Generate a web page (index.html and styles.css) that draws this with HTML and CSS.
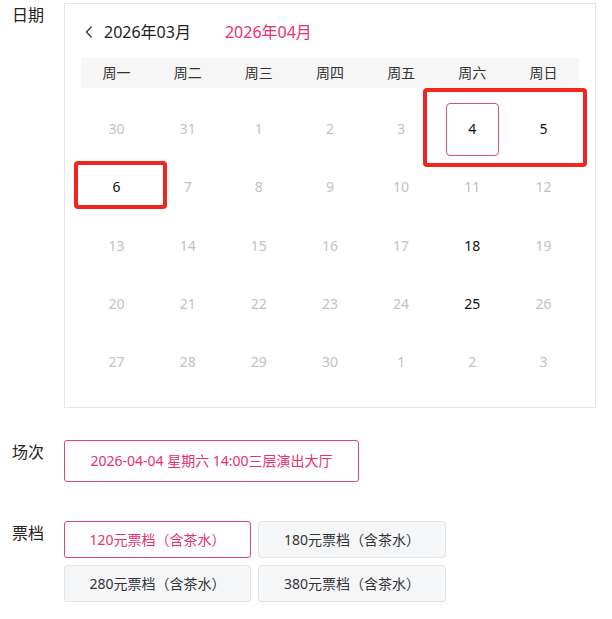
FILE: index.html
```html
<!DOCTYPE html>
<html lang="zh-CN">
<head>
<meta charset="utf-8">
<title>选择场次</title>
<link rel="stylesheet" href="styles.css">
</head>
<body>
<div class="page">
  <div class="row">
    <div class="label">日期</div>
    <div class="calendar">
      <div class="nav">
        <svg class="chev" width="10" height="14" viewBox="0 0 10 14"><path d="M7.5 1.5 L2.5 7 L7.5 12.5" fill="none" stroke="#333" stroke-width="1.3"/></svg>
        <span class="month">2026年03月</span>
        <span class="month active">2026年04月</span>
      </div>
      <div class="weekdays">
        <span>周一</span><span>周二</span><span>周三</span><span>周四</span><span>周五</span><span>周六</span><span>周日</span>
      </div>
      <div class="days">
        <div class="day off">30</div><div class="day off">31</div><div class="day off">1</div><div class="day off">2</div><div class="day off">3</div><div class="day"><span class="sel">4</span></div><div class="day">5</div>
        <div class="day">6</div><div class="day off">7</div><div class="day off">8</div><div class="day off">9</div><div class="day off">10</div><div class="day off">11</div><div class="day off">12</div>
        <div class="day off">13</div><div class="day off">14</div><div class="day off">15</div><div class="day off">16</div><div class="day off">17</div><div class="day">18</div><div class="day off">19</div>
        <div class="day off">20</div><div class="day off">21</div><div class="day off">22</div><div class="day off">23</div><div class="day off">24</div><div class="day">25</div><div class="day off">26</div>
        <div class="day off">27</div><div class="day off">28</div><div class="day off">29</div><div class="day off">30</div><div class="day off">1</div><div class="day off">2</div><div class="day off">3</div>
      </div>
    </div>
  </div>

  <div class="row session-row">
    <div class="label">场次</div>
    <div class="session">2026-04-04 星期六 14:00三层演出大厅</div>
  </div>

  <div class="row ticket-row">
    <div class="label">票档</div>
    <div class="tickets">
      <div class="ticket chosen">120元票档（含茶水）</div>
      <div class="ticket">180元票档（含茶水）</div>
      <div class="ticket">280元票档（含茶水）</div>
      <div class="ticket">380元票档（含茶水）</div>
    </div>
  </div>

  <div class="mark mark-a"></div>
  <div class="mark mark-b"></div>
</div>
</body>
</html>
```

FILE: styles.css
```css
html, body {
  margin: 0;
  padding: 0;
  background: #ffffff;
}

body {
  font-family: "Noto Sans", "Noto Sans CJK SC", sans-serif;
  color: #222;
}

.page {
  position: relative;
  width: 612px;
  height: 619px;
  padding-top: 3px;
  box-sizing: border-box;
}

.row {
  display: flex;
  align-items: flex-start;
}

.label {
  flex: 0 0 64px;
  box-sizing: border-box;
  padding-left: 12px;
  padding-top: 1px;
  font-size: 16px;
  line-height: 22px;
  color: #222;
}

.calendar {
  width: 532px;
  box-sizing: border-box;
  border: 1px solid #e6e6e6;
  padding: 15px 16px 16px 16px;
}

.nav {
  display: flex;
  align-items: center;
  height: 26px;
  margin-bottom: 13px;
}

.chev {
  margin-left: 3px;
  margin-right: 10px;
}

.month {
  font-size: 16px;
  line-height: 26px;
  color: #222;
}

.month.active {
  color: #e8306a;
  margin-left: 34px;
}

.weekdays {
  display: grid;
  grid-template-columns: repeat(7, 1fr);
  height: 30px;
  background: #f6f6f6;
  align-items: center;
  text-align: center;
  font-size: 14px;
  line-height: 20px;
  color: #333;
}

.days {
  display: grid;
  grid-template-columns: repeat(7, 1fr);
  grid-auto-rows: 58.25px;
  margin-top: 12px;
}

.day {
  display: flex;
  align-items: center;
  justify-content: center;
  font-size: 14px;
  line-height: 20px;
  color: #111;
}

.day.off {
  color: #c2c2c2;
}

.sel {
  display: flex;
  align-items: center;
  justify-content: center;
  width: 53px;
  height: 53px;
  box-sizing: border-box;
  border: 1px solid #d6508a;
  border-radius: 4px;
}

.session-row {
  margin-top: 32px;
}

.session {
  display: flex;
  align-items: center;
  justify-content: center;
  width: 295px;
  height: 42px;
  box-sizing: border-box;
  border: 1px solid #e3447a;
  border-radius: 3px;
  font-size: 14px;
  line-height: 20px;
  color: #e8306a;
}

.ticket-row {
  margin-top: 39px;
}

.tickets {
  display: grid;
  grid-template-columns: 187px 188px;
  grid-auto-rows: 37px;
  gap: 7px 7px;
}

.ticket {
  display: flex;
  align-items: center;
  justify-content: center;
  box-sizing: border-box;
  border: 1px solid #e3e4e6;
  border-radius: 3px;
  background: #f5f6f8;
  font-size: 14px;
  line-height: 20px;
  color: #333;
}

.ticket.chosen {
  background: #ffffff;
  border-color: #e3447a;
  color: #e8306a;
}

.mark {
  position: absolute;
  box-sizing: border-box;
  border: 4px solid #f0261e;
  border-radius: 4px;
}

.mark-a {
  left: 423px;
  top: 88px;
  width: 164px;
  height: 79px;
}

.mark-b {
  left: 74px;
  top: 161px;
  width: 93px;
  height: 48px;
}
```
